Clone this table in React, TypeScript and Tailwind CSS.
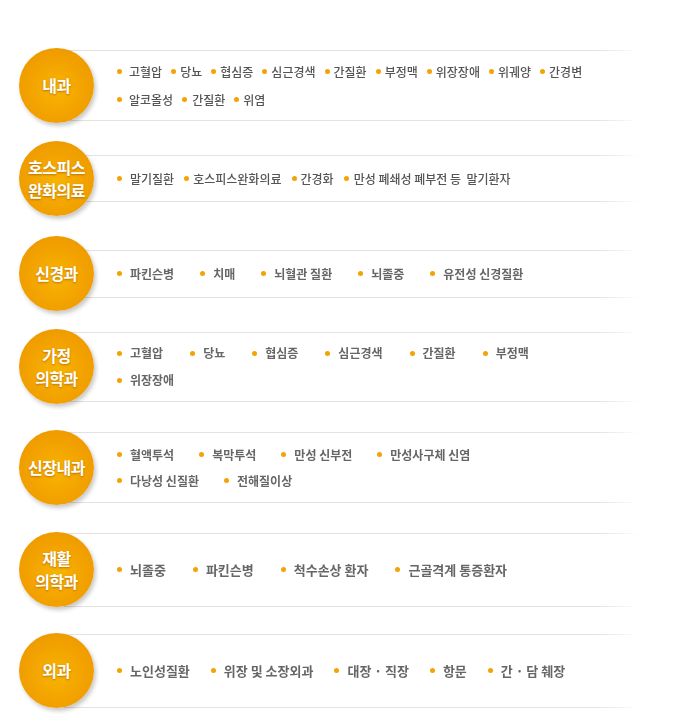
import React from "react";

type Item = { t: string; g?: string };

type Section = {
  title: string[];
  mt: string;
  box: string;
  text: string;
  gap: string;
  bulletGap: string;
  row: string;
  rows: Item[][];
};

const sections: Section[] = [
  {
    title: ["내과"],
    mt: "mt-[48px]",
    box: "h-[71px]",
    text: "text-[12px] font-medium text-[#555]",
    gap: "gap-x-[9px]",
    bulletGap: "ml-[4px]",
    row: "h-[28px]",
    rows: [
      [
        { t: "고혈압", g: "ml-[7px]" },
        { t: "당뇨" },
        { t: "협심증" },
        { t: "심근경색" },
        { t: "간질환" },
        { t: "부정맥" },
        { t: "위장장애" },
        { t: "위궤양" },
        { t: "간경변" },
      ],
      [{ t: "알코올성", g: "ml-[7px]" }, { t: "간질환", g: "ml-[5px]" }, { t: "위염" }],
    ],
  },
  {
    title: ["호스피스", "완화의료"],
    mt: "mt-[18px]",
    box: "h-[47px]",
    text: "text-[12px] font-medium text-[#555]",
    gap: "gap-x-[10px]",
    bulletGap: "ml-[4px]",
    row: "h-[28px]",
    rows: [
      [
        { t: "말기질환", g: "ml-[8px]" },
        { t: "호스피스완화의료" },
        { t: "간경화" },
        { t: "만성 폐쇄성 폐부전 등  말기환자", g: "ml-[5px]" },
      ],
    ],
  },
  {
    title: ["신경과"],
    mt: "mt-[20px]",
    box: "h-[48px]",
    text: "text-[12px] font-bold text-[#666]",
    gap: "gap-x-[26px]",
    bulletGap: "ml-[8px]",
    row: "h-[27px]",
    rows: [
      [
        { t: "파킨슨병" },
        { t: "치매" },
        { t: "뇌혈관 질환" },
        { t: "뇌졸중" },
        { t: "유전성 신경질환" },
      ],
    ],
  },
  {
    title: ["가정", "의학과"],
    mt: "mt-[18px]",
    box: "h-[70px]",
    text: "text-[12px] font-bold text-[#666]",
    gap: "gap-x-[27px]",
    bulletGap: "ml-[8px]",
    row: "h-[27px]",
    rows: [
      [
        { t: "고혈압" },
        { t: "당뇨" },
        { t: "협심증" },
        { t: "심근경색" },
        { t: "간질환" },
        { t: "부정맥" },
      ],
      [{ t: "위장장애" }],
    ],
  },
  {
    title: ["신장내과"],
    mt: "mt-[26px]",
    box: "h-[71px]",
    text: "text-[12px] font-bold text-[#666]",
    gap: "gap-x-[25px]",
    bulletGap: "ml-[8px]",
    row: "h-[26px]",
    rows: [
      [{ t: "혈액투석" }, { t: "복막투석" }, { t: "만성 신부전" }, { t: "만성사구체 신염" }],
      [{ t: "다낭성 신질환" }, { t: "전해질이상" }],
    ],
  },
  {
    title: ["재활", "의학과"],
    mt: "mt-[27px]",
    box: "h-[74px]",
    text: "text-[13px] font-bold text-[#666]",
    gap: "gap-x-[27px]",
    bulletGap: "ml-[8px]",
    row: "h-[27px]",
    rows: [
      [{ t: "뇌졸중" }, { t: "파킨슨병" }, { t: "척수손상 환자" }, { t: "근골격계 통증환자" }],
    ],
  },
  {
    title: ["외과"],
    mt: "mt-[26px]",
    box: "h-[74px]",
    text: "text-[13px] font-bold text-[#666]",
    gap: "gap-x-[21px]",
    bulletGap: "ml-[8px]",
    row: "h-[27px]",
    rows: [
      [
        { t: "노인성질환" },
        { t: "위장 및 소장외과" },
        { t: "대장 · 직장" },
        { t: "항문" },
        { t: "간 · 담 췌장" },
      ],
    ],
  },
];

const Badge = ({ lines }: { lines: string[] }) => (
  <div className="relative z-10 flex h-[75px] w-[75px] shrink-0 items-center justify-center rounded-full bg-[radial-gradient(circle_at_50%_55%,#f8b400_0%,#f3a400_45%,#ea9300_100%)] shadow-[2px_3px_4px_rgba(0,0,0,0.22)]">
    <p className="text-center text-[16px] font-bold leading-[23px] tracking-[-0.5px] text-white [text-shadow:0_1px_2px_rgba(140,70,0,0.55)]">
      {lines.map((l, i) => (
        <React.Fragment key={l}>
          {i > 0 && <br />}
          {l}
        </React.Fragment>
      ))}
    </p>
  </div>
);

export default function App() {
  return (
    <div className="h-[725px] w-[680px] overflow-hidden bg-white pl-[19px] font-['Noto_Sans_CJK_KR','Noto_Sans',sans-serif]">
      {sections.map((s) => (
        <div key={s.title.join("")} className={`flex items-center ${s.mt}`}>
          <Badge lines={s.title} />
          <div
            className={`-ml-[30px] flex w-[578px] flex-col justify-center rounded-r-[10px] border-y border-[#e2e2e2] bg-white pl-[53px] shadow-[0_1px_3px_rgba(0,0,0,0.07)] [mask-image:linear-gradient(to_right,#000_92%,transparent)] ${s.box}`}
          >
            {s.rows.map((row, ri) => (
              <div key={ri} className={`flex items-center ${s.gap} ${s.row}`}>
                {row.map((it, ii) => (
                  <div key={ii} className="flex items-center">
                    <span className="h-[5px] w-[5px] rounded-full bg-[#f4a300]" />
                    <span className={`whitespace-pre ${s.text} ${it.g ?? s.bulletGap}`}>{it.t}</span>
                  </div>
                ))}
              </div>
            ))}
          </div>
        </div>
      ))}
    </div>
  );
}
